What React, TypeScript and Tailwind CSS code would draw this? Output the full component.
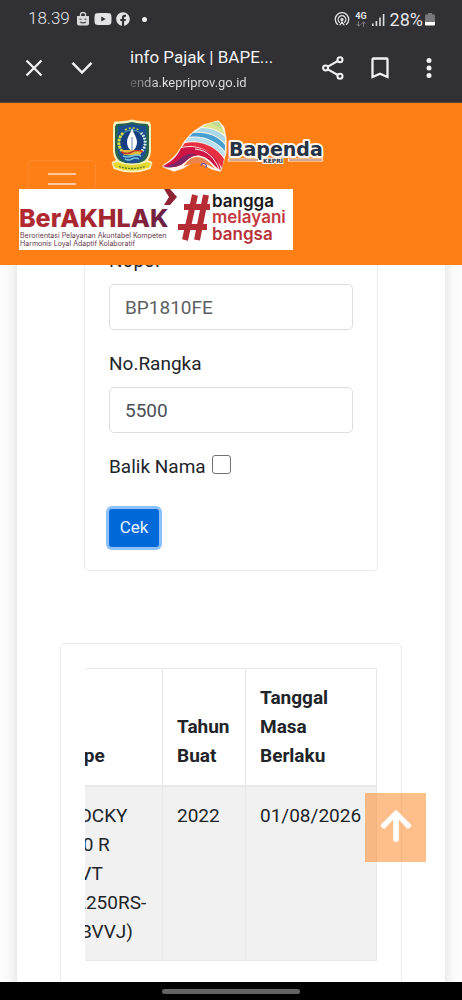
import React from "react";
import { FaArrowUp, FaFacebook, FaYoutube } from "react-icons/fa";

function StatusBar() {
  return (
    <div className="flex h-[38px] items-center justify-between pl-7 pr-[27px] text-[17px] text-[#e4e4e6]">
      <div className="flex items-center gap-1.5">
        <span className="font-light">18.39</span>
        <svg viewBox="0 0 14 14" className="h-3.5 w-3.5" aria-hidden="true">
          <path d="M4.5 4V2.5a2.5 2 0 0 1 5 0V4" fill="none" stroke="#d8d8da" strokeWidth="1.3" />
          <path d="M1 4h12v7.5a2 2 0 0 1-2 2H3a2 2 0 0 1-2-2z" fill="#d8d8da" />
          <path d="M3.5 7.2h2M8.5 7.2h2M4 10q3 1.8 6 0" fill="none" stroke="#4a4a4e" strokeWidth="1.1" />
        </svg>
        <FaYoutube className="-ml-0.5 h-[18px] w-[18px]" aria-hidden="true" />
        <FaFacebook className="-ml-0.5 h-3.5 w-3.5" aria-hidden="true" />
        <span className="ml-1.5 h-[5px] w-[5px] rounded-full bg-[#f2f2f2]" />
      </div>
      <div className="flex items-center gap-[5px]">
        <svg viewBox="0 0 16 14" className="h-3.5 w-4" fill="none" stroke="#e0e0e2" strokeWidth="1.3" strokeLinecap="round" aria-hidden="true">
          <path d="M3.6 12.4a6.7 6.7 0 1 1 8.8 0" />
          <path d="M5.3 10.2a3.8 3.8 0 1 1 5.4 0" />
          <circle cx="8" cy="7.6" r="1" fill="#e0e0e2" />
          <path d="M6 12.8l2-3 2 3" />
        </svg>
        <div className="flex flex-col items-center text-[9px] font-bold leading-[9px]">
          <span>4G</span>
          <svg viewBox="0 0 10 6" className="h-1.5 w-2.5" fill="none" stroke="#7b7b80" aria-hidden="true">
            <path d="M2.5 0v5M.5 3l2 2.3 2-2.3M7.5 6V1M5.5 3l2-2.3 2 2.3" />
          </svg>
        </div>
        <svg viewBox="0 0 13 13" className="h-[13px] w-[13px]" fill="#dcdcde" aria-hidden="true">
          <path d="M0 10.5h1.6V13H0zM3.6 8h1.6v5H3.6zM7.2 4.5h1.6V13H7.2zM10.8 1h1.6v12h-1.6z" />
        </svg>
        <div className="flex items-center gap-0.5 text-[18px]">
          <span>28%</span>
          <svg viewBox="0 0 10 14" className="h-3.5 w-2.5" aria-hidden="true">
            <path d="M3 1h4v1.2h1.5A1.5 1.5 0 0 1 10 3.7V10H0V3.7a1.5 1.5 0 0 1 1.5-1.5H3z" fill="#77777b" />
            <path d="M0 10h10v2.5a1 1 0 0 1-1 1H1a1 1 0 0 1-1-1z" fill="#fff" />
          </svg>
        </div>
      </div>
    </div>
  );
}

function BrowserBar() {
  return (
    <div className="flex h-[65px] items-center border-b border-[#5a4538] pb-1 pl-[25px] pr-6 text-[#f1f1f3]">
      <button type="button" aria-label="Tutup" className="w-[18px]">
        <svg viewBox="0 0 18 18" className="h-[18px] w-[18px]" fill="none" stroke="currentColor" strokeWidth="2.3">
          <path d="M1.5 1.5l15 15M16.5 1.5l-15 15" />
        </svg>
      </button>
      <button type="button" aria-label="Perkecil" className="ml-7 w-[22px]">
        <svg viewBox="0 0 22 14" className="h-3.5 w-[22px]" fill="none" stroke="currentColor" strokeWidth="2.5">
          <path d="M1.5 1.8L11 11.5l9.5-9.7" />
        </svg>
      </button>
      <div className="ml-[37px] min-w-0 flex-1 pt-1">
        <div className="truncate text-[17px] leading-[26px]">info Pajak | BAPE...</div>
        <div className="truncate bg-linear-to-r from-[#55555a] to-[#e4e4e6] to-15% bg-clip-text text-[13px] leading-[26px] text-transparent">
          enda.kepriprov.go.id
        </div>
      </div>
      <div className="flex items-center gap-[26px]">
        <button type="button" aria-label="Bagikan">
          <svg viewBox="0 0 23 24" className="h-6 w-[23px]" fill="none" stroke="currentColor" strokeWidth="2.1">
            <path d="M5.8 10.6L15.8 5M5.8 13.4l10 5.6" />
            <circle cx="3.6" cy="12" r="2.5" />
            <circle cx="18" cy="3.8" r="2.5" />
            <circle cx="18" cy="20.2" r="2.5" />
          </svg>
        </button>
        <button type="button" aria-label="Simpan">
          <svg viewBox="0 0 18 22" className="h-[22px] w-[18px]" fill="none" stroke="currentColor" strokeWidth="2.3">
            <path d="M1.5 20V2.5q0-1 1-1h13q1 0 1 1V20L9 16.7z" />
          </svg>
        </button>
        <button type="button" aria-label="Menu lainnya" className="ml-[5px]">
          <svg viewBox="0 0 18 22" className="h-[22px] w-[18px]" fill="currentColor">
            <circle cx="9" cy="3.5" r="2.5" />
            <circle cx="9" cy="11" r="2.5" />
            <circle cx="9" cy="18.5" r="2.5" />
          </svg>
        </button>
      </div>
    </div>
  );
}

function Crest() {
  return (
    <svg viewBox="0 0 42 54" className="h-[54px] w-[42px]" role="img" aria-label="Kepulauan Riau">
      <path d="M21 .5C27 2 34 2.5 38.5 2.5L40 6v26c0 8-6 13-11 15l-8 3-8-3C8 45 2 40 2 32V6l1.5-3.5C8 2.5 15 2 21 .5z" fill="#f7f0bc" />
      <path d="M21 3c6 1.5 11 1.8 15.5 2L38 7.5V31c0 8-5 12-10 14l-7 3-7-3C9 43 4 39 4 31V7.5L5.5 5C10 4.8 15 4.5 21 3z" fill="#23634f" />
      <path d="M21 5c5 1.3 10 1.8 14 2v23c0 7-4 11-8 13l-6 2-6-2c-4-2-8-6-8-13V7c4-.2 9-.7 14-2z" fill="#1d4f91" />
      <circle cx="21" cy="24" r="13" fill="#164081" stroke="#58a6a0" strokeWidth="1" />
      <path d="M12 14a13 13 0 0 0-1 18" fill="none" stroke="#d5dc3f" strokeWidth="3" strokeDasharray="2.5 1" />
      <path d="M30 14a13 13 0 0 1 1 18" fill="none" stroke="#e6eef2" strokeWidth="3" strokeDasharray="1.5 1.5" />
      <path d="M14 11q7-4 14 0" fill="none" stroke="#cddc39" strokeWidth="1.5" strokeDasharray="2 2" />
      <path d="M21 9c1 5 5 9 5 14 0 4-2 7-3.5 8h-3C18 30 16 27 16 23c0-5 4-9 5-14z" fill="#fff" />
      <path d="M21 18v13" stroke="#6788a8" strokeWidth="1" />
      <path d="M10 31h22l-3 5H13z" fill="#e3bd3d" />
      <path d="M10 33q5.5 3 11 0t11 0" fill="none" stroke="#b73531" strokeWidth="1.5" />
      <path d="M12 37q4.5 2 9 0t9 0M14 40q3.5 2 7 0t7 0" fill="none" stroke="#78c4de" strokeWidth="1.5" />
      <path d="M.5 43l5-2q15.5 7 31 0l5 2-2 7q-18.5 7-37 0z" fill="#f7f0bc" />
      <path d="M2 44.5l4-1.5q15 6.5 30 0l4 1.5-2 4q-17 6-34 0z" fill="#e4d92f" />
      <path d="M8 47.5q13 4 26 0" fill="none" stroke="#5c7c35" strokeWidth="1.3" strokeDasharray="2 1" />
    </svg>
  );
}

function BapendaLogo() {
  return (
    <svg viewBox="0 0 164 56" className="h-14 w-[164px]" role="img" aria-label="Bapenda Kepri">
      <path
        d="M3 47C12 42 17 36 21 29 25 20 34 12 43 7L57 3l5 6 2 10v14l-5 18-8-2-16-9-13 8-9 3z"
        fill="#fff5e8"
        stroke="#fff5e8"
        strokeWidth="3"
        strokeLinejoin="round"
      />
      <path d="M41 8C47 4 53 2 58 3c3 3 4 8 6 13-7-5-14-8-23-8z" fill="#dbe58f" />
      <path d="M50 5q7 1 11 6l-3-8q-4-1-8 2z" fill="#bcd898" />
      <path d="M34 13l6-4c10 0 18 3 24 9v6C56 16 46 12 34 13z" fill="#a9d7e4" />
      <path d="M28 18l4-4c14-1 25 3 32 12v6C55 22 43 16 28 18z" fill="#459fd1" />
      <path d="M24 23l3-4c16-2 29 4 37 15l-1 4C53 27 40 20 24 23z" fill="#b9deed" />
      <path d="M21 28l3-4c18-3 32 5 39 16l-2 9C52 34 40 24 21 28z" fill="#e72f3f" />
      <path d="M2 47C12 42 17 36 20 29c20-4 37 6 40 22-7-2-10-12-20-14-8-2-13 4-20 9q-8 4-18 1z" fill="#cd1645" />
      <path d="M2 48q11-2 17-8 8-8 17-4-8 1-12 7-8 7-22 5z" fill="#7e2568" />
      <path d="M34 30c13 1 20 10 24 20" fill="none" stroke="#fff5e8" strokeWidth="1" />
      <path d="M23 47c8-13 20-12 31 3-8-5-14-9-31-3z" fill="#ee844b" />
      <path d="M40 47q1-4 4-2t0 4" fill="none" stroke="#7d57a4" strokeWidth="1.4" />
      <text x="68" y="37" fontSize="19" fontWeight="700" fontFamily="'DejaVu Sans', sans-serif" fill="#263347" stroke="#fff7ed" strokeWidth="4" strokeLinejoin="round" paintOrder="stroke">Bapenda</text>
      <path d="M67 41h31M127 41h35" stroke="#fff7ed" strokeWidth="3" />
      <path d="M68 41h29M128 41h33" stroke="#a65239" strokeWidth="1" />
      <text x="112" y="44" textAnchor="middle" fontSize="6" fontWeight="700" fontFamily="'DejaVu Sans', sans-serif" fill="#263347" stroke="#fff7ed" strokeWidth="2" paintOrder="stroke">KEPRI</text>
    </svg>
  );
}

function ValuesBanner() {
  return (
    <svg viewBox="0 0 274 61" className="h-[61px] w-[274px] bg-white" role="img" aria-label="BerAKHLAK bangga melayani bangsa">
      <defs>
        <linearGradient id="maroon" x1="0" x2="1">
          <stop offset="0" stopColor="#b42a32" />
          <stop offset=".6" stopColor="#a4262f" />
          <stop offset="1" stopColor="#652045" />
        </linearGradient>
      </defs>
      <g fontFamily="Inter, sans-serif">
        <text x="0" y="38" fontSize="25" fontWeight="800" fill="url(#maroon)">BerAKHLAK</text>
        <text x="1" y="49" fontSize="7" fill="#65394a">Berorientasi Pelayanan Akuntabel Kompeten</text>
        <text x="1" y="57" fontSize="7" fill="#65394a">Harmonis Loyal Adaptif Kolaboratif</text>
        <text x="193" y="18" fontSize="17" fontWeight="600" fill="#171719">bangga</text>
        <text x="193" y="34" fontSize="17" fontWeight="600" fill="#c2393f">melayani</text>
        <text x="193" y="51" fontSize="17" fontWeight="600" fill="#b8323a">bangsa</text>
      </g>
      <path d="M145 0h6l7 8-7 8h-6l5-8z" fill="#8e2334" />
      <g fill="none" stroke="#b52c35" strokeWidth="6">
        <path d="M176 6l-10 45M187 6l-9 45" />
        <path d="M165 18h26M159 38h29" />
      </g>
    </svg>
  );
}

function SiteHeader() {
  return (
    <header className="relative shrink-0 bg-[#ff7f17] pb-[15px] pt-4">
      <button
        type="button"
        aria-label="Navigasi"
        className="absolute left-7 top-[57px] flex h-[50px] w-[68px] flex-col items-center gap-2 rounded border border-[#ff8b2c] pt-3"
      >
        <span className="h-0.5 w-7 bg-[#ffc79b]" />
        <span className="h-0.5 w-7 bg-[#ffc79b]" />
      </button>
      <div className="flex items-start gap-2 pl-[111px]">
        <Crest />
        <BapendaLogo />
      </div>
      <div className="relative mt-3.5 pl-[19px]">
        <ValuesBanner />
      </div>
    </header>
  );
}

const label = "mb-[9px] block text-[19px] leading-[29px]";
const field =
  "block h-[46px] w-full rounded-[5px] border border-[#dcdfe2] bg-white px-[15px] text-[19px] outline-none";

function CheckForm() {
  return (
    <form
      className="mx-[67px] rounded-[5px] border border-[#ececec] px-6 pb-[23px] pt-6"
      onSubmit={(e) => e.preventDefault()}
    >
      <label htmlFor="nopol" className={label}>Nopol</label>
      <input id="nopol" defaultValue="BP1810FE" className={`${field} mb-[19px] text-[#5d5f62]`} />
      <label htmlFor="rangka" className={label}>No.Rangka</label>
      <input id="rangka" defaultValue="5500" className={`${field} mb-[19px] text-[#495057]`} />
      <div className="flex items-center gap-1.5 text-[19px] leading-[29px]">
        <label htmlFor="balik">Balik Nama</label>
        <input
          id="balik"
          type="checkbox"
          className="mb-1 h-[19px] w-[19px] appearance-none rounded-[3px] border border-[#727272] bg-white checked:bg-[#0069d9]"
        />
      </div>
      <button
        type="submit"
        className="mt-7 block h-[38px] w-[50px] rounded-[3px] bg-[#0069d9] text-[17px] text-[#e9f3ff] ring-3 ring-[#8bc1fb]"
      >
        Cek
      </button>
    </form>
  );
}

const head = "border border-b-2 border-[#e6e8ea] pb-[15px] pl-3.5 pt-3.5 font-bold";
const cell = "border border-[#e6e8ea] pb-3.5 pl-3.5 pt-3.5";

function ResultTable() {
  return (
    <section className="mx-[43px] mt-[72px] rounded-[5px] border border-[#ebebeb] px-6 pb-12 pt-6">
      <div className="flex justify-end overflow-hidden">
        <table className="w-[325px] shrink-0 table-fixed border-collapse text-left text-[19px] leading-[29px]">
          <thead>
            <tr className="align-bottom">
              <th className={`${head} w-[110px]`}>Tipe</th>
              <th className={`${head} w-[83px]`}>
                Tahun
                <br />
                Buat
              </th>
              <th className={head}>
                Tanggal
                <br />
                Masa
                <br />
                Berlaku
              </th>
            </tr>
          </thead>
          <tbody>
            <tr className="bg-[#f1f1f1] align-top">
              <td className={`${cell} whitespace-nowrap`}>
                ROCKY
                <br />
                1.0 R
                <br />
                CVT
                <br />
                (A250RS-
                <br />
                GBVVJ)
              </td>
              <td className={cell}>2022</td>
              <td className={cell}>01/08/2026</td>
            </tr>
          </tbody>
        </table>
      </div>
    </section>
  );
}

export default function App() {
  return (
    <div className="flex h-screen flex-col overflow-hidden bg-[#fdfdfd] font-['Roboto',sans-serif] text-[#212529]">
      <div className="shrink-0 bg-[#303035]">
        <StatusBar />
        <BrowserBar />
      </div>
      <SiteHeader />
      <main className="min-h-0 flex-1 overflow-hidden">
        <div className="mx-[17px] -mt-11 min-h-full bg-white shadow-[0_0_14px_rgba(0,0,0,0.14)]">
          <CheckForm />
          <ResultTable />
        </div>
      </main>
      <a
        href="#root"
        aria-label="Kembali ke atas"
        className="fixed bottom-[138px] right-9 flex h-[69px] w-[61px] items-center justify-center bg-[#ff7f17]/50 pb-1 text-white"
      >
        <FaArrowUp className="h-9 w-9" />
      </a>
      <footer className="flex h-[18px] shrink-0 items-center justify-center bg-black">
        <span className="h-[5px] w-[30%] rounded-full bg-[#636363]" />
      </footer>
    </div>
  );
}
